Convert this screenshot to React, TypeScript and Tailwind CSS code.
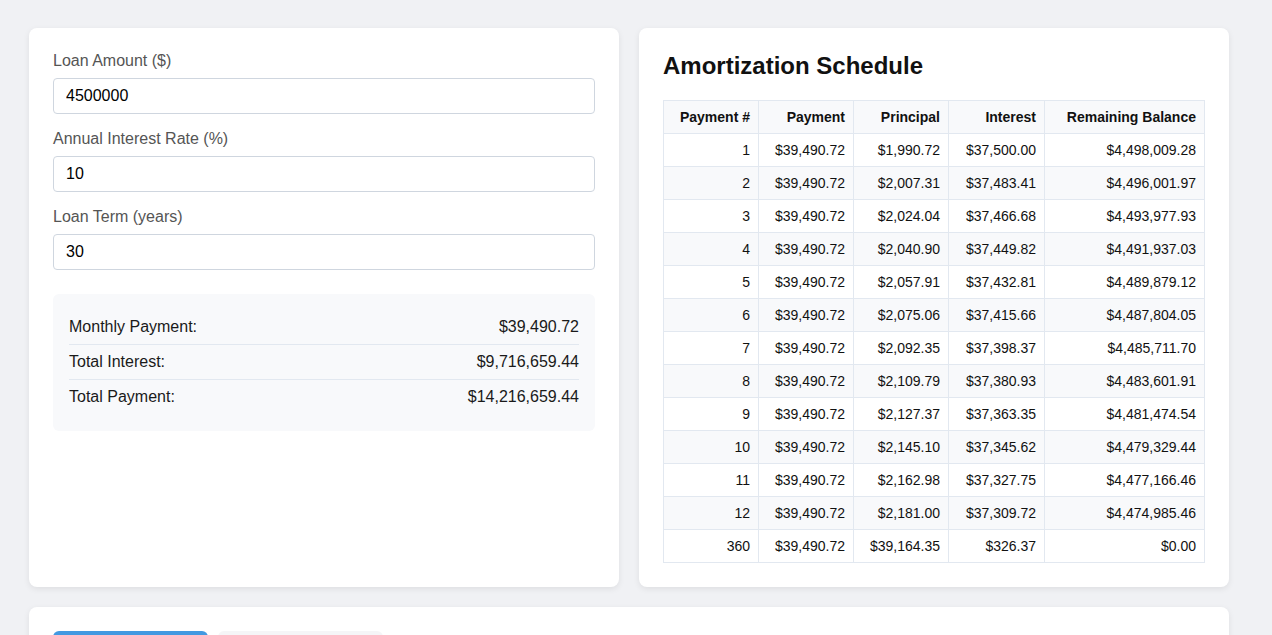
import React from "react";

const rows: [string, string, string, string, string][] = [
  ["1", "$39,490.72", "$1,990.72", "$37,500.00", "$4,498,009.28"],
  ["2", "$39,490.72", "$2,007.31", "$37,483.41", "$4,496,001.97"],
  ["3", "$39,490.72", "$2,024.04", "$37,466.68", "$4,493,977.93"],
  ["4", "$39,490.72", "$2,040.90", "$37,449.82", "$4,491,937.03"],
  ["5", "$39,490.72", "$2,057.91", "$37,432.81", "$4,489,879.12"],
  ["6", "$39,490.72", "$2,075.06", "$37,415.66", "$4,487,804.05"],
  ["7", "$39,490.72", "$2,092.35", "$37,398.37", "$4,485,711.70"],
  ["8", "$39,490.72", "$2,109.79", "$37,380.93", "$4,483,601.91"],
  ["9", "$39,490.72", "$2,127.37", "$37,363.35", "$4,481,474.54"],
  ["10", "$39,490.72", "$2,145.10", "$37,345.62", "$4,479,329.44"],
  ["11", "$39,490.72", "$2,162.98", "$37,327.75", "$4,477,166.46"],
  ["12", "$39,490.72", "$2,181.00", "$37,309.72", "$4,474,985.46"],
  ["360", "$39,490.72", "$39,164.35", "$326.37", "$0.00"],
];

function Field({ label, value }: { label: string; value: string }) {
  return (
    <div className="mb-4">
      <label className="block mb-2 text-[16px] leading-[18px] text-[#555]">{label}</label>
      <input
        readOnly
        value={value}
        className="block w-full h-9 px-3 border border-[#cfd6df] rounded-[4px] text-[16px] text-black bg-white outline-none"
        style={{ fontFamily: '"Liberation Sans", Arial, sans-serif' }}
      />
    </div>
  );
}

function SummaryRow({ label, value, last }: { label: string; value: string; last?: boolean }) {
  return (
    <div className={`flex justify-between py-2 leading-[18px] text-[16px] text-[#1a1a1a] ${last ? "" : "border-b border-[#e2e8f0]"}`}>
      <span>{label}</span>
      <span>{value}</span>
    </div>
  );
}

export default function App() {
  return (
    <div
      className="min-h-screen bg-[#f0f1f4] pt-[28px] pl-[29px] pb-10"
      style={{ fontFamily: '"Liberation Sans", Arial, Helvetica, sans-serif' }}
    >
      <div className="w-[1200px]">
        <div className="grid grid-cols-2 gap-5">
          <div className="bg-white rounded-lg shadow-[0_2px_6px_rgba(0,0,0,0.08)] p-6">
            <Field label="Loan Amount ($)" value="4500000" />
            <Field label="Annual Interest Rate (%)" value="10" />
            <Field label="Loan Term (years)" value="30" />
            <div className="mt-[24px] bg-[#f8f9fb] rounded-md px-4 pt-4 pb-[17px]">
              <SummaryRow label="Monthly Payment:" value="$39,490.72" />
              <SummaryRow label="Total Interest:" value="$9,716,659.44" />
              <SummaryRow label="Total Payment:" value="$14,216,659.44" last />
            </div>
          </div>
          <div className="bg-white rounded-lg shadow-[0_2px_6px_rgba(0,0,0,0.08)] px-6 pt-6 pb-6">
            <h2 className="text-[24px] font-bold leading-[28px] text-[#111] mb-[20px]">Amortization Schedule</h2>
            <table className="w-full table-fixed border-collapse text-[14px] leading-4 text-[#111]">
              <colgroup>
                <col className="w-[95px]" />
                <col className="w-[95px]" />
                <col className="w-[95px]" />
                <col className="w-[96px]" />
                <col />
              </colgroup>
              <thead>
                <tr className="bg-[#f8f9fb]">
                  {["Payment #", "Payment", "Principal", "Interest", "Remaining Balance"].map((h) => (
                    <th key={h} className="border border-[#e2e8f0] px-2 py-2 text-right font-bold">
                      {h}
                    </th>
                  ))}
                </tr>
              </thead>
              <tbody>
                {rows.map((r, i) => (
                  <tr key={r[0]} className={i % 2 === 1 ? "bg-[#f8f9fb]" : "bg-white"}>
                    {r.map((c, j) => (
                      <td key={j} className="border border-[#e2e8f0] px-2 py-2 text-right whitespace-nowrap">
                        {c}
                      </td>
                    ))}
                  </tr>
                ))}
              </tbody>
            </table>
          </div>
        </div>
        <div className="mt-5 bg-white rounded-lg shadow-[0_2px_6px_rgba(0,0,0,0.08)] p-6">
          <div className="flex gap-[10px]">
            <button className="w-[155px] h-10 rounded-md bg-[#4299e1]" />
            <button className="w-[165px] h-10 rounded-md bg-[#f5f5f7]" />
          </div>
          <div className="h-[300px]" />
        </div>
      </div>
    </div>
  );
}
